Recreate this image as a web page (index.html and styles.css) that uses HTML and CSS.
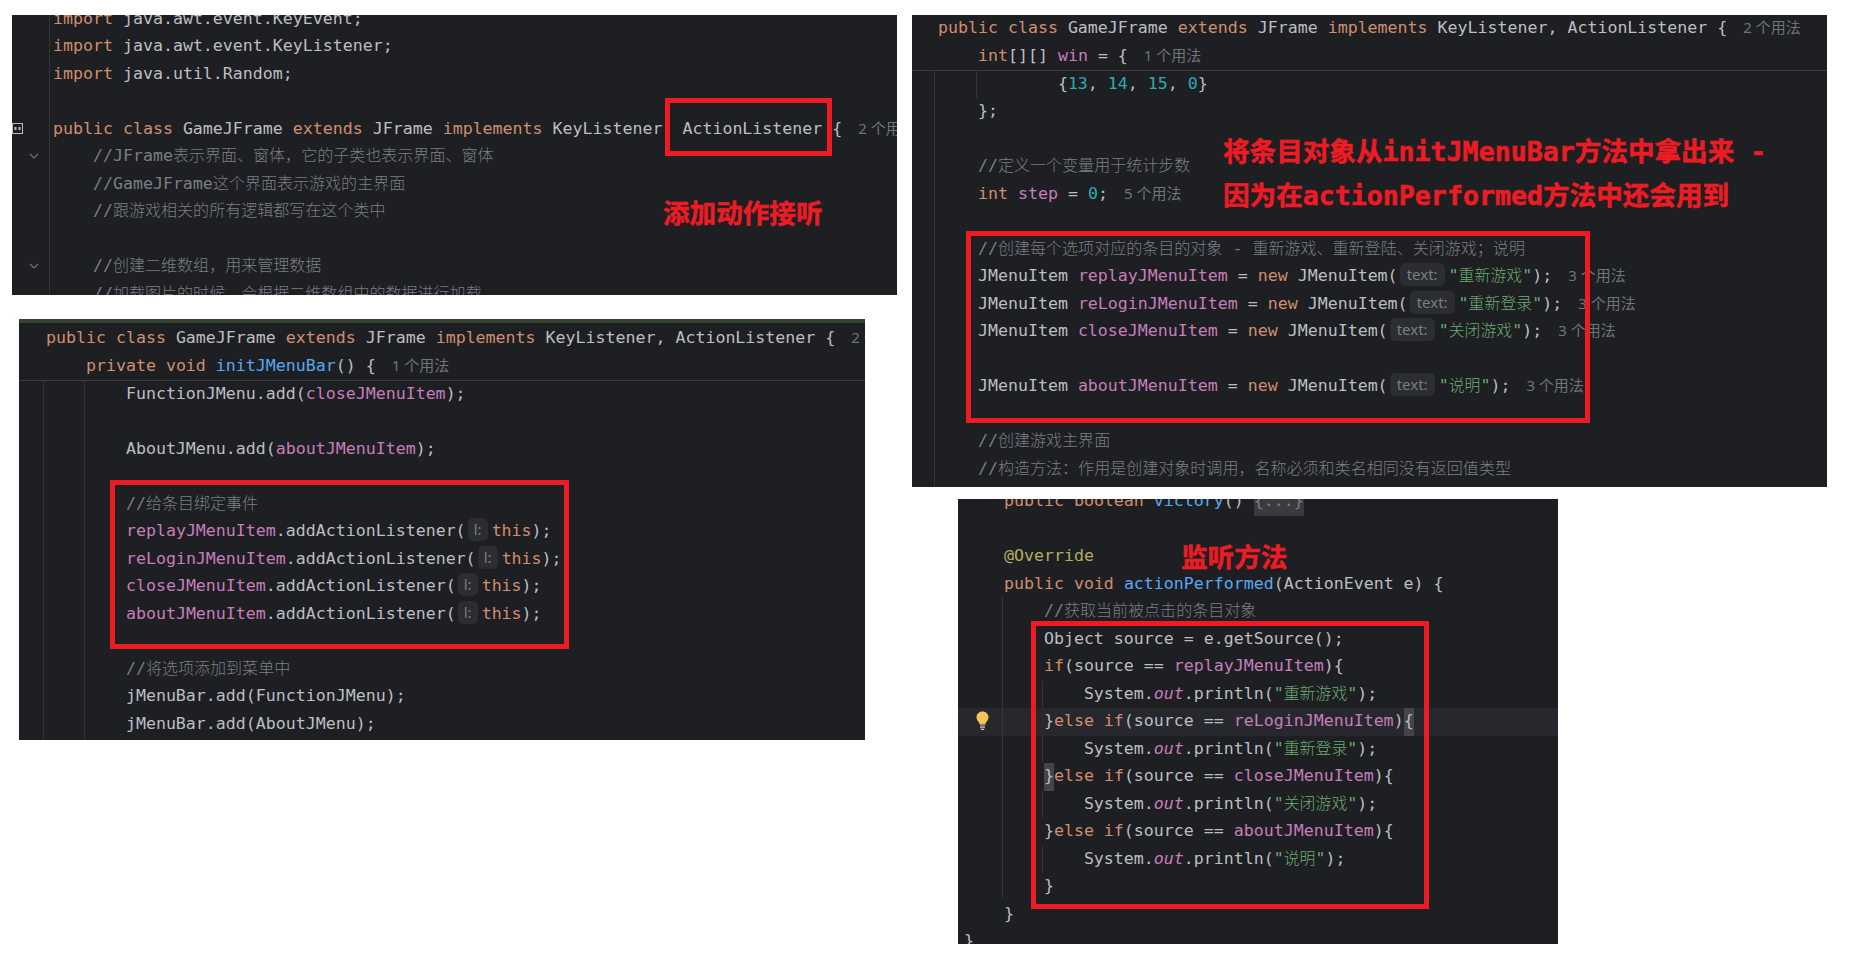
FILE: index.html
```html
<!DOCTYPE html>
<html lang="zh">
<head>
<meta charset="utf-8">
<title>GameJFrame</title>
<link rel="stylesheet" href="styles.css">
</head>
<body>
<div class="page">
  <div class="col-left">
    <section class="shot shot-a">
      <div class="code">
        <div class="ln"><b>import</b> java.awt.event.KeyEvent;</div>
        <div class="ln"><b>import</b> java.awt.event.KeyListener;</div>
        <div class="ln"><b>import</b> java.util.Random;</div>
        <div class="ln"></div>
        <div class="ln"><b>public class</b> GameJFrame <b>extends</b> JFrame <b>implements</b> KeyListener, ActionListener {<span class="hint">2 个用法</span></div>
        <div class="ln"><i class="c">    //JFrame<span class="z">表示界面、窗体，它的子类也表示界面、窗体</span></i></div>
        <div class="ln"><i class="c">    //GameJFrame<span class="z">这个界面表示游戏的主界面</span></i></div>
        <div class="ln"><i class="c">    //<span class="z">跟游戏相关的所有逻辑都写在这个类中</span></i></div>
        <div class="ln"></div>
        <div class="ln"><i class="c">    //<span class="z">创建二维数组，用来管理数据</span></i></div>
        <div class="ln"><i class="c">    //<span class="z">加载图片的时候，会根据二维数组中的数据进行加载</span></i></div>
      </div>
      <div class="guide a-gutter"></div>
      <svg class="a-mark" viewBox="0 0 11 11"><rect x="0.5" y="0.5" width="10" height="10" fill="none" stroke="#bcbec4"/><rect x="2.5" y="4" width="2" height="3" fill="#bcbec4"/><rect x="6.5" y="4" width="2" height="3" fill="#bcbec4"/></svg>
      <svg class="chev a-chev1" viewBox="0 0 10 6"><path d="M1 1l4 4 4-4" fill="none" stroke="#6f737a" stroke-width="1.2"/></svg>
      <svg class="chev a-chev2" viewBox="0 0 10 6"><path d="M1 1l4 4 4-4" fill="none" stroke="#6f737a" stroke-width="1.2"/></svg>
      <div class="redbox a-box"></div>
      <div class="note a-note">添加动作接听</div>
    </section>

    <section class="shot shot-c">
      <div class="strip"></div>
      <div class="sticky">
        <div class="ln"><b>public class</b> GameJFrame <b>extends</b> JFrame <b>implements</b> KeyListener, ActionListener {<span class="hint">2 个用法</span></div>
        <div class="ln">    <b>private void</b> <em>initJMenuBar</em>() {<span class="hint">1 个用法</span></div>
      </div>
      <div class="code">
        <div class="ln">        FunctionJMenu.add(<u>closeJMenuItem</u>);</div>
        <div class="ln"></div>
        <div class="ln">        AboutJMenu.add(<u>aboutJMenuItem</u>);</div>
        <div class="ln"></div>
        <div class="ln"><i class="c">        //<span class="z">给条目绑定事件</span></i></div>
        <div class="ln">        <u>replayJMenuItem</u>.addActionListener(<span class="pill pill-l">l:</span><b>this</b>);</div>
        <div class="ln">        <u>reLoginJMenuItem</u>.addActionListener(<span class="pill pill-l">l:</span><b>this</b>);</div>
        <div class="ln">        <u>closeJMenuItem</u>.addActionListener(<span class="pill pill-l">l:</span><b>this</b>);</div>
        <div class="ln">        <u>aboutJMenuItem</u>.addActionListener(<span class="pill pill-l">l:</span><b>this</b>);</div>
        <div class="ln"></div>
        <div class="ln"><i class="c">        //<span class="z">将选项添加到菜单中</span></i></div>
        <div class="ln">        jMenuBar.add(FunctionJMenu);</div>
        <div class="ln">        jMenuBar.add(AboutJMenu);</div>
      </div>
      <div class="guide c-g1"></div>
      <div class="guide c-g2"></div>
      <div class="redbox c-box"></div>
    </section>
  </div>

  <div class="col-right">
    <section class="shot shot-b">
      <div class="sticky">
        <div class="ln"><b>public class</b> GameJFrame <b>extends</b> JFrame <b>implements</b> KeyListener, ActionListener {<span class="hint">2 个用法</span></div>
        <div class="ln">    <b>int</b>[][] <u>win</u> = {<span class="hint">1 个用法</span></div>
      </div>
      <div class="code">
        <div class="ln">            {<s>13</s>, <s>14</s>, <s>15</s>, <s>0</s>}</div>
        <div class="ln">    };</div>
        <div class="ln"></div>
        <div class="ln"><i class="c">    //<span class="z">定义一个变量用于统计步数</span></i></div>
        <div class="ln">    <b>int</b> <u>step</u> = <s>0</s>;<span class="hint">5 个用法</span></div>
        <div class="ln"></div>
        <div class="ln"><i class="c">    //<span class="z">创建每个选项对应的条目的对象</span> - <span class="z">重新游戏、重新登陆、关闭游戏；说明</span></i></div>
        <div class="ln">    JMenuItem <u>replayJMenuItem</u> = <b>new</b> JMenuItem(<span class="pill">text:</span><q>"<span class="z">重新游戏</span>"</q>);<span class="hint">3 个用法</span></div>
        <div class="ln">    JMenuItem <u>reLoginJMenuItem</u> = <b>new</b> JMenuItem(<span class="pill">text:</span><q>"<span class="z">重新登录</span>"</q>);<span class="hint">3 个用法</span></div>
        <div class="ln">    JMenuItem <u>closeJMenuItem</u> = <b>new</b> JMenuItem(<span class="pill">text:</span><q>"<span class="z">关闭游戏</span>"</q>);<span class="hint">3 个用法</span></div>
        <div class="ln"></div>
        <div class="ln">    JMenuItem <u>aboutJMenuItem</u> = <b>new</b> JMenuItem(<span class="pill">text:</span><q>"<span class="z">说明</span>"</q>);<span class="hint">3 个用法</span></div>
        <div class="ln"></div>
        <div class="ln"><i class="c">    //<span class="z">创建游戏主界面</span></i></div>
        <div class="ln"><i class="c">    //<span class="z">构造方法：作用是创建对象时调用，名称必须和类名相同没有返回值类型</span></i></div>
      </div>
      <div class="guide b-g1"></div>
      <div class="guide b-g2"></div>
      <div class="redbox b-box"></div>
      <div class="note b-note1">将条目对象从initJMenuBar方法中拿出来 -</div>
      <div class="note b-note2">因为在actionPerformed方法中还会用到</div>
    </section>

    <section class="shot shot-d">
      <div class="code">
        <div class="ln">    <b>public boolean</b> <em>victory</em>() <span class="fold">{...}</span></div>
        <div class="ln"></div>
        <div class="ln">    <span class="ann">@Override</span></div>
        <div class="ln">    <b>public void</b> <em>actionPerformed</em>(ActionEvent e) {</div>
        <div class="ln"><i class="c">        //<span class="z">获取当前被点击的条目对象</span></i></div>
        <div class="ln">        Object source = e.getSource();</div>
        <div class="ln">        <b>if</b>(source == <u>replayJMenuItem</u>){</div>
        <div class="ln body">            System.<u class="it">out</u>.println(<q>"<span class="z">重新游戏</span>"</q>);</div>
        <div class="ln caret">        }<b>else if</b>(source == <u>reLoginJMenuItem</u>)<span class="match">{</span></div>
        <div class="ln body">            System.<u class="it">out</u>.println(<q>"<span class="z">重新登录</span>"</q>);</div>
        <div class="ln">        <span class="match">}</span><b>else if</b>(source == <u>closeJMenuItem</u>){</div>
        <div class="ln body">            System.<u class="it">out</u>.println(<q>"<span class="z">关闭游戏</span>"</q>);</div>
        <div class="ln">        }<b>else if</b>(source == <u>aboutJMenuItem</u>){</div>
        <div class="ln body">            System.<u class="it">out</u>.println(<q>"<span class="z">说明</span>"</q>);</div>
        <div class="ln">        }</div>
        <div class="ln">    }</div>
        <div class="ln">}</div>
      </div>
      <div class="guide d-g1"></div>
      <svg class="bulb" viewBox="0 0 13 19"><path d="M6.5 0.5C3 0.5 0.5 3 0.5 6.2c0 2.6 1.6 3.9 2.6 5.6.4.7.5 1.2.5 1.7h5.8c0-.5.1-1 .5-1.7 1-1.7 2.6-3 2.6-5.6C12.500 3 10 .5 6.500 .5z" fill="#f2c55c"/><path d="M4 15h5M4 16.800h5M5 18.500h3" stroke="#ced0d6" stroke-width="1.100" fill="none"/></svg>
      <div class="redbox d-box"></div>
      <div class="note d-note">监听方法</div>
    </section>
  </div>
</div>
</body>
</html>
```
FILE: styles.css
```css
* { box-sizing: border-box; }
html, body { margin: 0; padding: 0; background: #fff; }
.page { display: flex; width: 1851px; height: 967px; overflow: hidden; }
.col-left { width: 912px; flex: none; }
.col-right { width: 939px; flex: none; }

.shot {
  position: relative;
  overflow: hidden;
  background: #1e1f22;
  color: #bcbec4;
  font: 16.6px/26.5px "DejaVu Sans Mono", "Noto Sans CJK SC", monospace;
}
.shot-a { width: 885px; height: 280px; margin: 15px 0 0 12px; }
.shot-c { width: 846px; height: 421px; margin: 24px 0 0 19px; }
.shot-b { width: 915px; height: 472px; margin-top: 15px; }
.shot-d { width: 600px; height: 445px; margin: 12px 0 0 46px; }

.shot-a .code { margin-top: -9.5px; }
.shot-d .code { margin-top: -11px; }
.shot-a .ln { padding-left: 41px; }
.shot-b .ln { padding-left: 26px; }
.shot-c .ln { padding-left: 27px; }
.shot-d .ln { padding-left: 6px; }

.ln { height: 27.5px; white-space: pre; }
.z { font-size: 15.9px; font-weight: 300; }
.c .z { font-size: 16.05px; }
.sticky { border-bottom: 1px solid #393b40; height: 55.5px; }
.strip { height: 4px; background: #34432f; margin-bottom: 2px; }

b { font-weight: 400; color: #cf8e6d; }
i.c { font-style: normal; color: #7a7e85; }
u { text-decoration: none; color: #c77dbb; }
u.it { font-style: italic; }
em { font-style: normal; color: #56a8f5; }
s { text-decoration: none; color: #2aacb8; }
q { quotes: none; color: #6aab73; }
.ann { color: #b3ae60; }

.hint {
  margin-left: 16px;
  color: #6f737a;
  font: 15px "Noto Sans", "Noto Sans CJK SC", sans-serif;
}
.pill {
  display: inline-block;
  width: 45px;
  height: 23px;
  margin: 0 4px 0 2px;
  border-radius: 5px;
  background: #2b2d30;
  color: #7a7e85;
  font: 15px/23px "Noto Sans", sans-serif;
  text-align: center;
  vertical-align: 1px;
}
.pill-l { width: 20px; }
.fold { display: inline-block; background: #393b40; color: #7a7e85; height: 27.5px; }
.match { display: inline-block; background: #43454a; height: 27.5px; vertical-align: top; }
.caret { background: #26282e; }
.body { position: relative; }
.body::before {
  content: "";
  position: absolute;
  left: 84px;
  top: 0;
  bottom: 0;
  width: 1px;
  background: #313438;
}

.guide { position: absolute; width: 1px; background: #313438; }
.a-gutter { left: 37px; top: 0; bottom: 0; }
.b-g1 { left: 22px; top: 56px; bottom: 0; }
.b-g2 { left: 64px; top: 56px; height: 27px; }
.c-g1 { left: 24px; top: 62px; bottom: 0; }
.c-g2 { left: 65px; top: 62px; bottom: 0; }
.d-g1 { left: 44px; top: 98px; height: 301px; }

.a-mark { position: absolute; left: 0; top: 108px; width: 11px; height: 11px; }
.chev { position: absolute; left: 17px; width: 10px; height: 6px; }
.a-chev1 { top: 138px; }
.a-chev2 { top: 248px; }
.bulb { position: absolute; left: 18px; top: 212px; width: 13px; height: 19px; }

.redbox { position: absolute; border: 5px solid #ed1c24; }
.a-box { left: 653px; top: 83px; width: 167px; height: 58px; }
.b-box { left: 54px; top: 216px; width: 624px; height: 192px; }
.c-box { left: 91px; top: 161px; width: 459px; height: 169px; }
.d-box { left: 73px; top: 122px; width: 398px; height: 288px; }

.note {
  position: absolute;
  color: #ed1c24;
  font: 700 26.6px/32px "DejaVu Sans Mono", "Noto Sans CJK SC", monospace;
  -webkit-text-stroke: 0.5px #ed1c24;
  white-space: pre;
}
.a-note { left: 651px; top: 183px; }
.b-note1 { left: 311px; top: 121px; }
.b-note2 { left: 311px; top: 165px; }
.d-note { left: 223px; top: 43px; }
```
